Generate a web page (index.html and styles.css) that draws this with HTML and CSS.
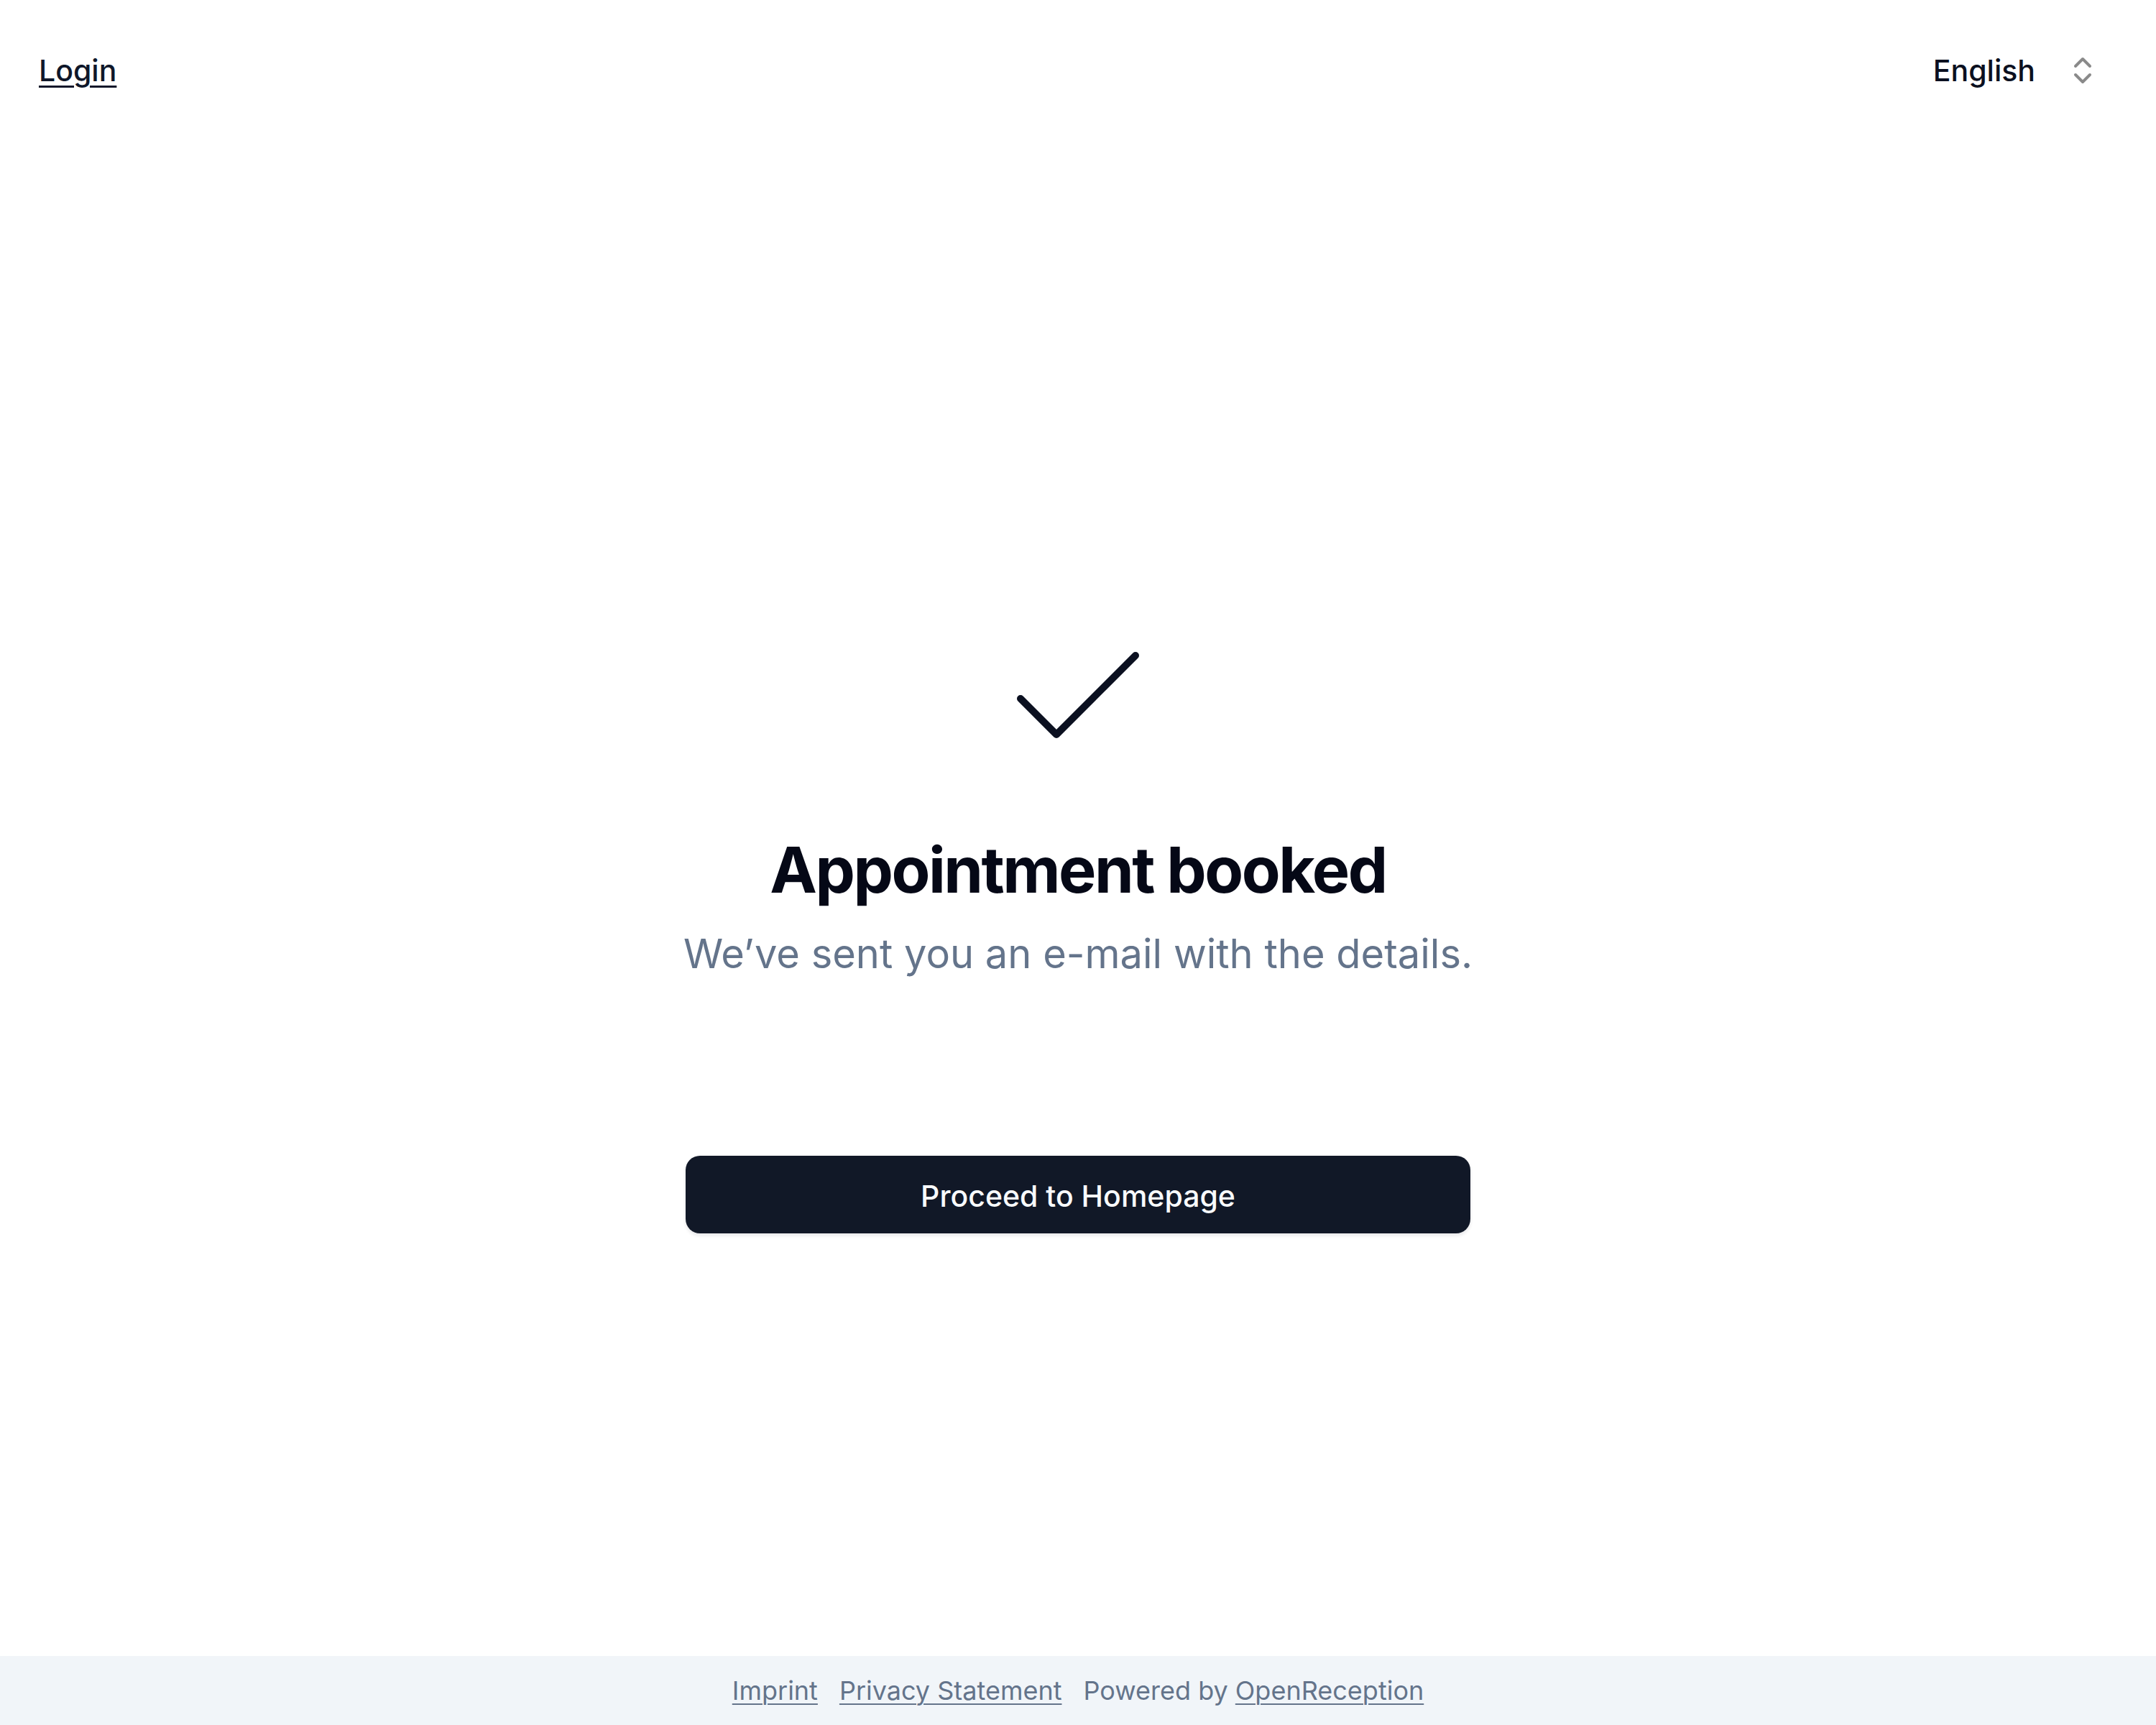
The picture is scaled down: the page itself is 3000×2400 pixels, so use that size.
FILE: index.html
```html
<!DOCTYPE html>
<html lang="en">

<head>
    <meta charset="UTF-8">
    <meta name="viewport" content="width=device-width, initial-scale=1.0">
    <title>Appointment booked</title>
    <link rel="stylesheet" href="styles.css">
</head>

<body>
    <div class="page">
        <header class="topbar">
            <a href="#" class="login-link">Login</a>
            <div class="lang-select">
                <span class="lang-label">English</span>
                <svg class="lang-icon" viewBox="0 0 24 24" fill="none" stroke="currentColor" stroke-width="2"
                    stroke-linecap="round" stroke-linejoin="round">
                    <path d="m7 15 5 5 5-5" />
                    <path d="m7 9 5-5 5 5" />
                </svg>
            </div>
        </header>

        <main class="content">
            <svg class="check-icon" viewBox="0 0 24 24" fill="none" stroke="currentColor" stroke-width="1"
                stroke-linecap="round" stroke-linejoin="round">
                <path d="M20 6 9 17l-5-5" />
            </svg>
            <h1 class="title">Appointment booked</h1>
            <p class="subtitle">We’ve sent you an e-mail with the details.</p>
            <button class="home-btn">Proceed to Homepage</button>
        </main>

        <footer class="footer">
            <a href="#" class="footer-link">Imprint</a>
            <a href="#" class="footer-link">Privacy Statement</a>
            <span class="powered">Powered by <a href="#" class="footer-link">OpenReception</a></span>
        </footer>
    </div>
</body>

</html>
```

FILE: styles.css
```css
body {
    margin: 0;
    padding: 0;
    font-family: Inter, 'Noto Sans', sans-serif;
    background-color: #fff;
    color: #0f172a;
}

.page {
    min-height: 2400px;
    display: flex;
    flex-direction: column;
}

.topbar {
    height: 196px;
    display: flex;
    align-items: center;
    justify-content: space-between;
    padding: 0 78px 0 54px;
}

.login-link {
    font-size: 41px;
    font-weight: 500;
    line-height: 56px;
    color: #0f172a;
    text-decoration: underline;
    text-underline-offset: 6px;
    text-decoration-thickness: 3px;
}

.lang-select {
    display: flex;
    align-items: center;
    gap: 42px;
}

.lang-label {
    font-size: 41px;
    font-weight: 500;
    line-height: 56px;
    color: #0b1020;
}

.lang-icon {
    width: 48px;
    height: 48px;
    color: #8a8a8a;
}

.content {
    flex: 1;
    display: flex;
    flex-direction: column;
    align-items: center;
    padding-top: 656px;
}

.check-icon {
    width: 240px;
    height: 240px;
    color: #0b1020;
}

.title {
    margin: 70px 0 0;
    font-size: 88px;
    line-height: 97px;
    font-weight: 700;
    letter-spacing: -2.5px;
    color: #050816;
}

.subtitle {
    margin: 29px 0 0;
    font-size: 56px;
    line-height: 78px;
    color: #64748b;
}

.home-btn {
    margin-top: 242px;
    width: 1092px;
    height: 108px;
    background-color: #111827;
    color: #f8fafc;
    border: none;
    border-radius: 20px;
    font-family: inherit;
    font-size: 41px;
    font-weight: 500;
    padding-top: 4px;
    box-shadow: 0 3px 5px rgba(15, 23, 42, 0.1);
    cursor: pointer;
}

.footer {
    height: 96px;
    background-color: #f1f5f9;
    display: flex;
    align-items: center;
    justify-content: center;
    gap: 30px;
    font-size: 36px;
    color: #64748b;
}

.footer-link {
    color: #64748b;
    text-decoration: underline;
    text-underline-offset: 5px;
    text-decoration-thickness: 2px;
}
```
